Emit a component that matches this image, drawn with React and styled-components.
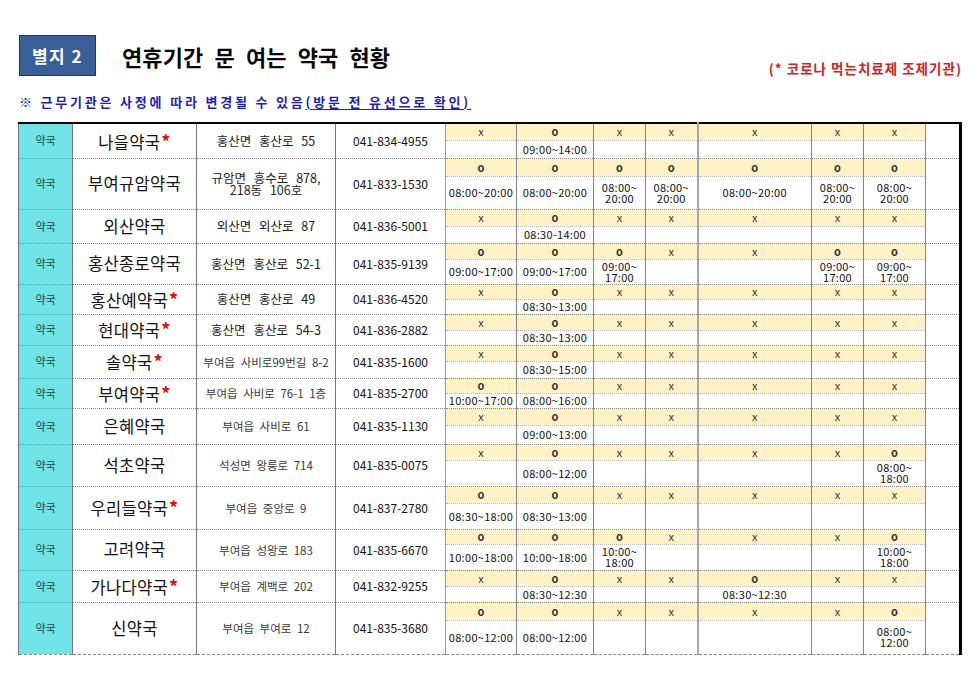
import React from "react";
import styled, { createGlobalStyle } from "styled-components";

const GlobalStyle = createGlobalStyle`
  body {
    margin: 0;
    background: #fff;
    font-family: "Noto Sans CJK KR", "Noto Sans", sans-serif;
    color: #111;
  }
`;

const pharmacies = [
  { name: "나을약국", star: true, addr: "홍산면 홍산로 55", tel: "041-834-4955", h: [17, 18],
    days: ["x", "o|09:00~14:00", "x", "x", "x", "x", "x"] },
  { name: "부여규암약국", addr: "규암면 흥수로 878,\n218동 106호", tel: "041-833-1530", h: [18, 33],
    days: ["o|08:00~20:00", "o|08:00~20:00", "o|08:00~\n20:00", "o|08:00~\n20:00", "o|08:00~20:00", "o|08:00~\n20:00", "o|08:00~\n20:00"] },
  { name: "외산약국", addr: "외산면 외산로 87", tel: "041-836-5001", h: [17, 17],
    days: ["x", "o|08:30-14:00", "x", "x", "x", "x", "x"] },
  { name: "홍산종로약국", addr: "홍산면 홍산로 52-1", tel: "041-835-9139", h: [16, 25],
    days: ["o|09:00~17:00", "o|09:00~17:00", "o|09:00~\n17:00", "x", "x", "o|09:00~\n17:00", "o|09:00~\n17:00"] },
  { name: "홍산예약국", star: true, addr: "홍산면 홍산로 49", tel: "041-836-4520", h: [15, 15],
    days: ["x", "o|08:30~13:00", "x", "x", "x", "x", "x"] },
  { name: "현대약국", star: true, addr: "홍산면 홍산로 54-3", tel: "041-836-2882", h: [16, 15],
    days: ["x", "o|08:30~13:00", "x", "x", "x", "x", "x"] },
  { name: "솔약국", star: true, addr: "부여읍 사비로99번길 8-2", small: true, tel: "041-835-1600", h: [16, 17],
    days: ["x", "o|08:30~15:00", "x", "x", "x", "x", "x"] },
  { name: "부여약국", star: true, addr: "부여읍 사비로 76-1 1층", small: true, tel: "041-835-2700", h: [15, 15],
    days: ["o|10:00~17:00", "o|08:00~16:00", "x", "x", "x", "x", "x"] },
  { name: "은혜약국", addr: "부여읍 사비로 61", small: true, tel: "041-835-1130", h: [17, 19],
    days: ["x", "o|09:00~13:00", "x", "x", "x", "x", "x"] },
  { name: "석초약국", addr: "석성면 왕릉로 714", small: true, tel: "041-835-0075", h: [16, 26],
    days: ["x", "o|08:00~12:00", "x", "x", "x", "x", "o|08:00~\n18:00"] },
  { name: "우리들약국", star: true, addr: "부여읍 중앙로 9", small: true, tel: "041-837-2780", h: [17, 26],
    days: ["o|08:30~18:00", "o|08:30~13:00", "x", "x", "x", "x", "x"] },
  { name: "고려약국", addr: "부여읍 성왕로 183", small: true, tel: "041-835-6670", h: [15, 26],
    days: ["o|10:00~18:00", "o|10:00~18:00", "o|10:00~\n18:00", "x", "x", "x", "o|10:00~\n18:00"] },
  { name: "가나다약국", star: true, addr: "부여읍 계백로 202", small: true, tel: "041-832-9255", h: [16, 16],
    days: ["x", "o|08:30~12:30", "x", "x", "o|08:30~12:30", "x", "x"] },
  { name: "신약국", addr: "부여읍 부여로 12", small: true, tel: "041-835-3680", h: [18, 34],
    days: ["o|08:00~12:00", "o|08:00~12:00", "x", "x", "x", "x", "o|08:00~\n12:00"] },
];

const colWidths = [54, 124, 139, 110, 71, 77, 52, 52, 114, 52, 62, 35];

const App = () => {
  return (
    <Page>
      <GlobalStyle />
      <Header>
        <Badge>별지 2</Badge>
        <Title>연휴기간 문 여는 약국 현황</Title>
        <CovidNote>(* 코로나 먹는치료제 조제기관)</CovidNote>
      </Header>

      <Notice>
        ※ 근무기관은 사정에 따라 변경될 수 있음<u>(방문 전 유선으로 확인)</u>
      </Notice>

      <Table>
        <colgroup>
          {colWidths.map((w, i) => (
            <Col key={i} $w={w} />
          ))}
        </colgroup>
        <tbody>
          {pharmacies.map((p) => {
            const days = p.days.map((d) => d.split("|"));
            return (
              <React.Fragment key={p.name}>
                <BandRow $h={p.h[0]}>
                  <KindCell rowSpan={2}>약국</KindCell>
                  <NameCell rowSpan={2}>
                    {p.name}
                    {p.star && <Star>*</Star>}
                  </NameCell>
                  <AddrCell rowSpan={2} $small={p.small}>
                    {p.addr}
                  </AddrCell>
                  <TelCell rowSpan={2}>{p.tel}</TelCell>
                  {days.map(([mark], i) => (
                    <MarkCell key={i} $split={i === 4} $bold={mark === "o"}>
                      {mark}
                    </MarkCell>
                  ))}
                  <BlankCell rowSpan={2} />
                </BandRow>
                <BandRow $h={p.h[1]}>
                  {days.map(([, time], i) => (
                    <TimeCell key={i} $split={i === 4} $wrap={time && time.includes("\n")}>
                      {time || ""}
                    </TimeCell>
                  ))}
                </BandRow>
              </React.Fragment>
            );
          })}
        </tbody>
      </Table>
    </Page>
  );
};

const Page = styled.div`
  padding: 35px 19px 0 18px;
  width: 942px;
`;

const Header = styled.header`
  display: flex;
  align-items: center;
  height: 41px;
`;

const Badge = styled.div`
  box-sizing: border-box;
  width: 77px;
  height: 41px;
  margin-left: 1px;
  display: flex;
  align-items: center;
  justify-content: center;
  background: #3a5f98;
  border: 1px solid #1d3766;
  color: #fff;
  font-size: 17px;
  font-weight: 700;
  letter-spacing: 1.5px;
`;

const Title = styled.h1`
  margin: 1px 0 0 26px;
  font-size: 22px;
  font-weight: 700;
  letter-spacing: 0.1px;
  word-spacing: 6px;
  color: #0a0a0a;
`;

const CovidNote = styled.div`
  margin-left: auto;
  margin-right: -2px;
  align-self: flex-end;
  margin-bottom: -2px;
  color: #d42121;
  font-size: 13.5px;
  font-weight: 700;
  letter-spacing: 1px;
`;

const Notice = styled.p`
  margin: 17px 0 11px 1px;
  line-height: 18px;
  color: #1d1dc8;
  font-size: 13px;
  font-weight: 700;
  letter-spacing: 2.8px;

  u {
    text-underline-offset: 2px;
  }
`;

const Table = styled.table`
  width: 942px;
  table-layout: fixed;
  border-collapse: collapse;
  border-top: 2px solid #000;
  border-left: 1px solid #777;
  border-bottom: 1px dashed #888;

  td {
    padding: 0;
    text-align: center;
    vertical-align: middle;
    line-height: 1;
  }
`;

const Col = styled.col`
  width: ${({ $w }) => $w}px;
`;

const BandRow = styled.tr`
  height: ${({ $h }) => $h}px;
`;

const KindCell = styled.td`
  background: #70e3e6;
  color: #1e4848;
  font-size: 11px;
  border-right: 1px solid #777;
  border-bottom: 1px dotted #8a8a8a;
`;

const NameCell = styled.td`
  font-size: 16.5px;
  letter-spacing: 0.3px;
  color: #111;
  border-right: 1px solid #777;
  border-bottom: 1px dotted #8a8a8a;
  white-space: nowrap;
`;

const Star = styled.span`
  color: #e01010;
  font-weight: 700;
  font-size: 18px;
  margin-left: 1px;
`;

const AddrCell = styled.td`
  font-size: ${({ $small }) => ($small ? "11.5px" : "12.5px")};
  word-spacing: ${({ $small }) => ($small ? "3px" : "5px")};
  color: ${({ $small }) => ($small ? "#3a3a3a" : "#222")};
  line-height: 12px !important;
  white-space: pre-line;
  border-right: 1px solid #777;
  border-bottom: 1px dotted #8a8a8a;
`;

const TelCell = styled.td`
  font-size: 12px;
  color: #111;
  border-right: 1px solid #9a9a9a;
  border-bottom: 1px dotted #8a8a8a;
`;

const MarkCell = styled.td`
  background: #fff2c7;
  font-size: 11px;
  font-weight: ${({ $bold }) => ($bold ? 700 : 400)};
  color: #333;
  border-right: 1px solid #858585;
  border-left: ${({ $split }) => ($split ? "2px solid #a8a8a8" : "none")};
  border-bottom: 1px dotted #b5b5b5;
`;

const TimeCell = styled.td`
  background: #fff;
  font-size: 11px;
  letter-spacing: 0.3px;
  color: #111;
  white-space: pre-line;
  line-height: ${({ $wrap }) => ($wrap ? "11px" : "1")} !important;
  border-right: 1px solid #858585;
  border-left: ${({ $split }) => ($split ? "2px solid #a8a8a8" : "none")};
  border-bottom: 1px dotted #8a8a8a;
`;

const BlankCell = styled.td`
  background: #fff;
  border-right: 3px solid #000;
  border-bottom: 1px dotted #8a8a8a;
`;

export default App;
